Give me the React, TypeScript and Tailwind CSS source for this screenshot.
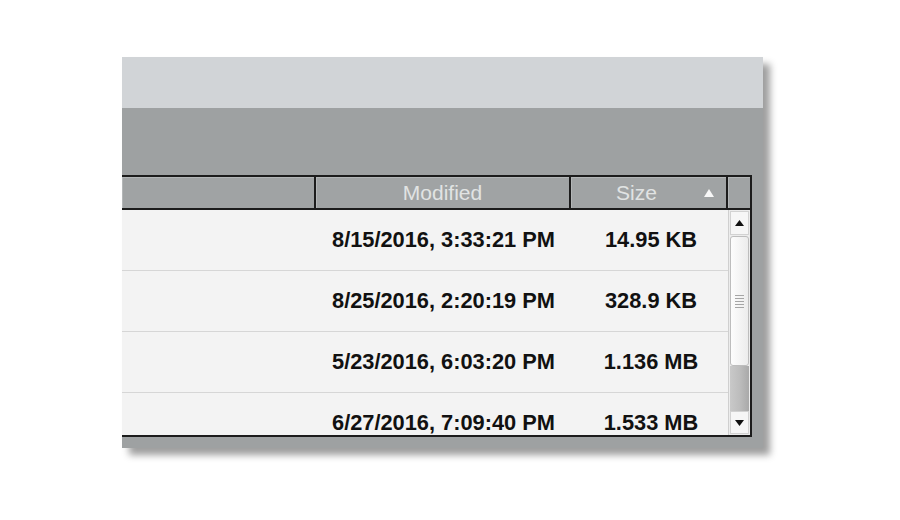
import React from 'react'

const rows = [
  { modified: '8/15/2016, 3:33:21 PM', size: '14.95 KB' },
  { modified: '8/25/2016, 2:20:19 PM', size: '328.9 KB' },
  { modified: '5/23/2016, 6:03:20 PM', size: '1.136 MB' },
  { modified: '6/27/2016, 7:09:40 PM', size: '1.533 MB' },
]

const headerCell =
  'h-full bg-[#a0a3a4] shadow-[inset_1px_1px_0_#b3b6b7] border-r-2 border-[#1c1c1c] flex items-center justify-center text-[#e1e3e3] text-[21px]'

function Scrollbar() {
  return (
    <div className="w-[22px] h-full flex flex-col bg-[#ececec] border-l border-[#cfcfcf]">
      {/* up button */}
      <div className="h-[24px] mt-px mx-px bg-[#f6f6f6] border border-[#d2d2d2] flex items-center justify-center">
        <svg width="9" height="6" viewBox="0 0 9 6">
          <path d="M4.5 0 L9 6 L0 6 Z" fill="#111" />
        </svg>
      </div>
      {/* thumb */}
      <div className="h-[130px] mx-px mt-px rounded-[3px] border border-[#bdbdbd] bg-gradient-to-r from-[#fdfdfd] to-[#ececec] flex items-center justify-center">
        <div className="flex flex-col gap-[2px]">
          <div className="w-[9px] h-px bg-[#a5a5a5]" />
          <div className="w-[9px] h-px bg-[#a5a5a5]" />
          <div className="w-[9px] h-px bg-[#a5a5a5]" />
          <div className="w-[9px] h-px bg-[#a5a5a5]" />
          <div className="w-[9px] h-px bg-[#a5a5a5]" />
        </div>
      </div>
      {/* track */}
      <div className="flex-1 mx-px bg-gradient-to-r from-[#c9c9c9] via-[#bdbdbd] to-[#a9a9a9]" />
      {/* down button */}
      <div className="h-[23px] mx-px mb-px bg-[#f6f6f6] border border-[#d2d2d2] flex items-center justify-center">
        <svg width="9" height="6" viewBox="0 0 9 6">
          <path d="M0 0 L9 0 L4.5 6 Z" fill="#111" />
        </svg>
      </div>
    </div>
  )
}

export default function App() {
  return (
    <div
      className="w-[900px] h-[520px] bg-white pt-[57px] pl-[122px]"
      style={{ fontFamily: '"Liberation Sans", Arial, sans-serif' }}
    >
      <div className="w-[641px] h-[391px] flex flex-col bg-[#9ea1a2] shadow-[7px_7px_7px_rgba(0,0,0,0.38)]">
        {/* top light bar */}
        <div className="h-[51px] bg-[#d1d4d7]" />
        {/* toolbar band */}
        <div className="h-[67px]" />

        {/* table */}
        <div className="mr-[11px] border-y-2 border-r-2 border-[#1c1c1c] flex flex-col">
          {/* header */}
          <div className="h-[33px] flex border-b-2 border-[#1c1c1c]">
            <div className={`${headerCell} w-[194px]`} />
            <div className={`${headerCell} w-[255px]`}>Modified</div>
            <div className={`${headerCell} w-[157px] relative`}>
              <span className="ml-[-24px]">Size</span>
              <svg className="absolute right-[12px] top-[12px]" width="10" height="8" viewBox="0 0 10 8">
                <path d="M5 0 L10 8 L0 8 Z" fill="#f7f7f7" />
              </svg>
            </div>
            <div className="h-full w-[22px] bg-[#a0a3a4] shadow-[inset_1px_1px_0_#b3b6b7]" />
          </div>

          {/* body */}
          <div className="h-[225px] flex overflow-hidden bg-[#f3f3f3]">
            <div className="flex-1 flex flex-col">
              {rows.map((r, i) => (
                <div
                  key={r.modified}
                  className={`${i === 3 ? 'h-[42px] items-start pt-[19px]' : 'h-[61px] border-b items-center'} shrink-0 flex border-[#d6d6d6] font-bold text-[21.8px] text-[#111] leading-none`}
                >
                  <div className="w-[194px]" />
                  <div className="w-[255px] text-center">{r.modified}</div>
                  <div className="w-[157px] text-center pl-[3px]">{r.size}</div>
                </div>
              ))}
            </div>
            <Scrollbar />
          </div>
        </div>
      </div>
    </div>
  )
}
